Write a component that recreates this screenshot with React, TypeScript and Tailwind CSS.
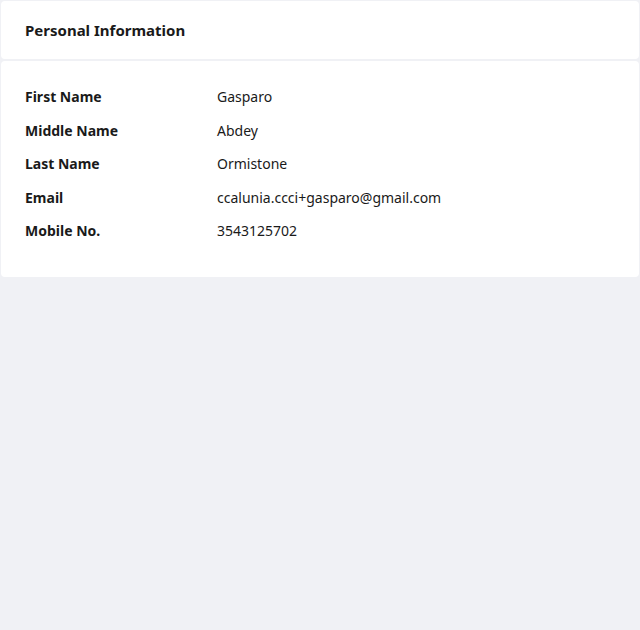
const rows = [
  { label: 'First Name', value: 'Gasparo' },
  { label: 'Middle Name', value: 'Abdey' },
  { label: 'Last Name', value: 'Ormistone' },
  { label: 'Email', value: 'ccalunia.ccci+gasparo@gmail.com' },
  { label: 'Mobile No.', value: '3543125702' },
]

export default function App() {
  return (
    <div
      className="min-h-[630px] bg-[#f0f1f5] p-px text-[#1a1a1a]"
      style={{ fontFamily: '"Noto Sans", "Open Sans", sans-serif' }}
    >
      <div className="flex flex-col gap-[2px]">
        <div className="bg-white rounded-[4px] h-[58px] px-6 flex items-center">
          <h2 className="text-[15px] font-bold">Personal Information</h2>
        </div>
        <div className="bg-white rounded-[4px] px-6 pt-[19px] pb-[29px]">
          {rows.map((r) => (
            <div key={r.label} className="flex items-center h-[33.5px] text-[14px]">
              <span className="w-[192px] shrink-0 font-bold">{r.label}</span>
              <span>{r.value}</span>
            </div>
          ))}
        </div>
      </div>
    </div>
  )
}
